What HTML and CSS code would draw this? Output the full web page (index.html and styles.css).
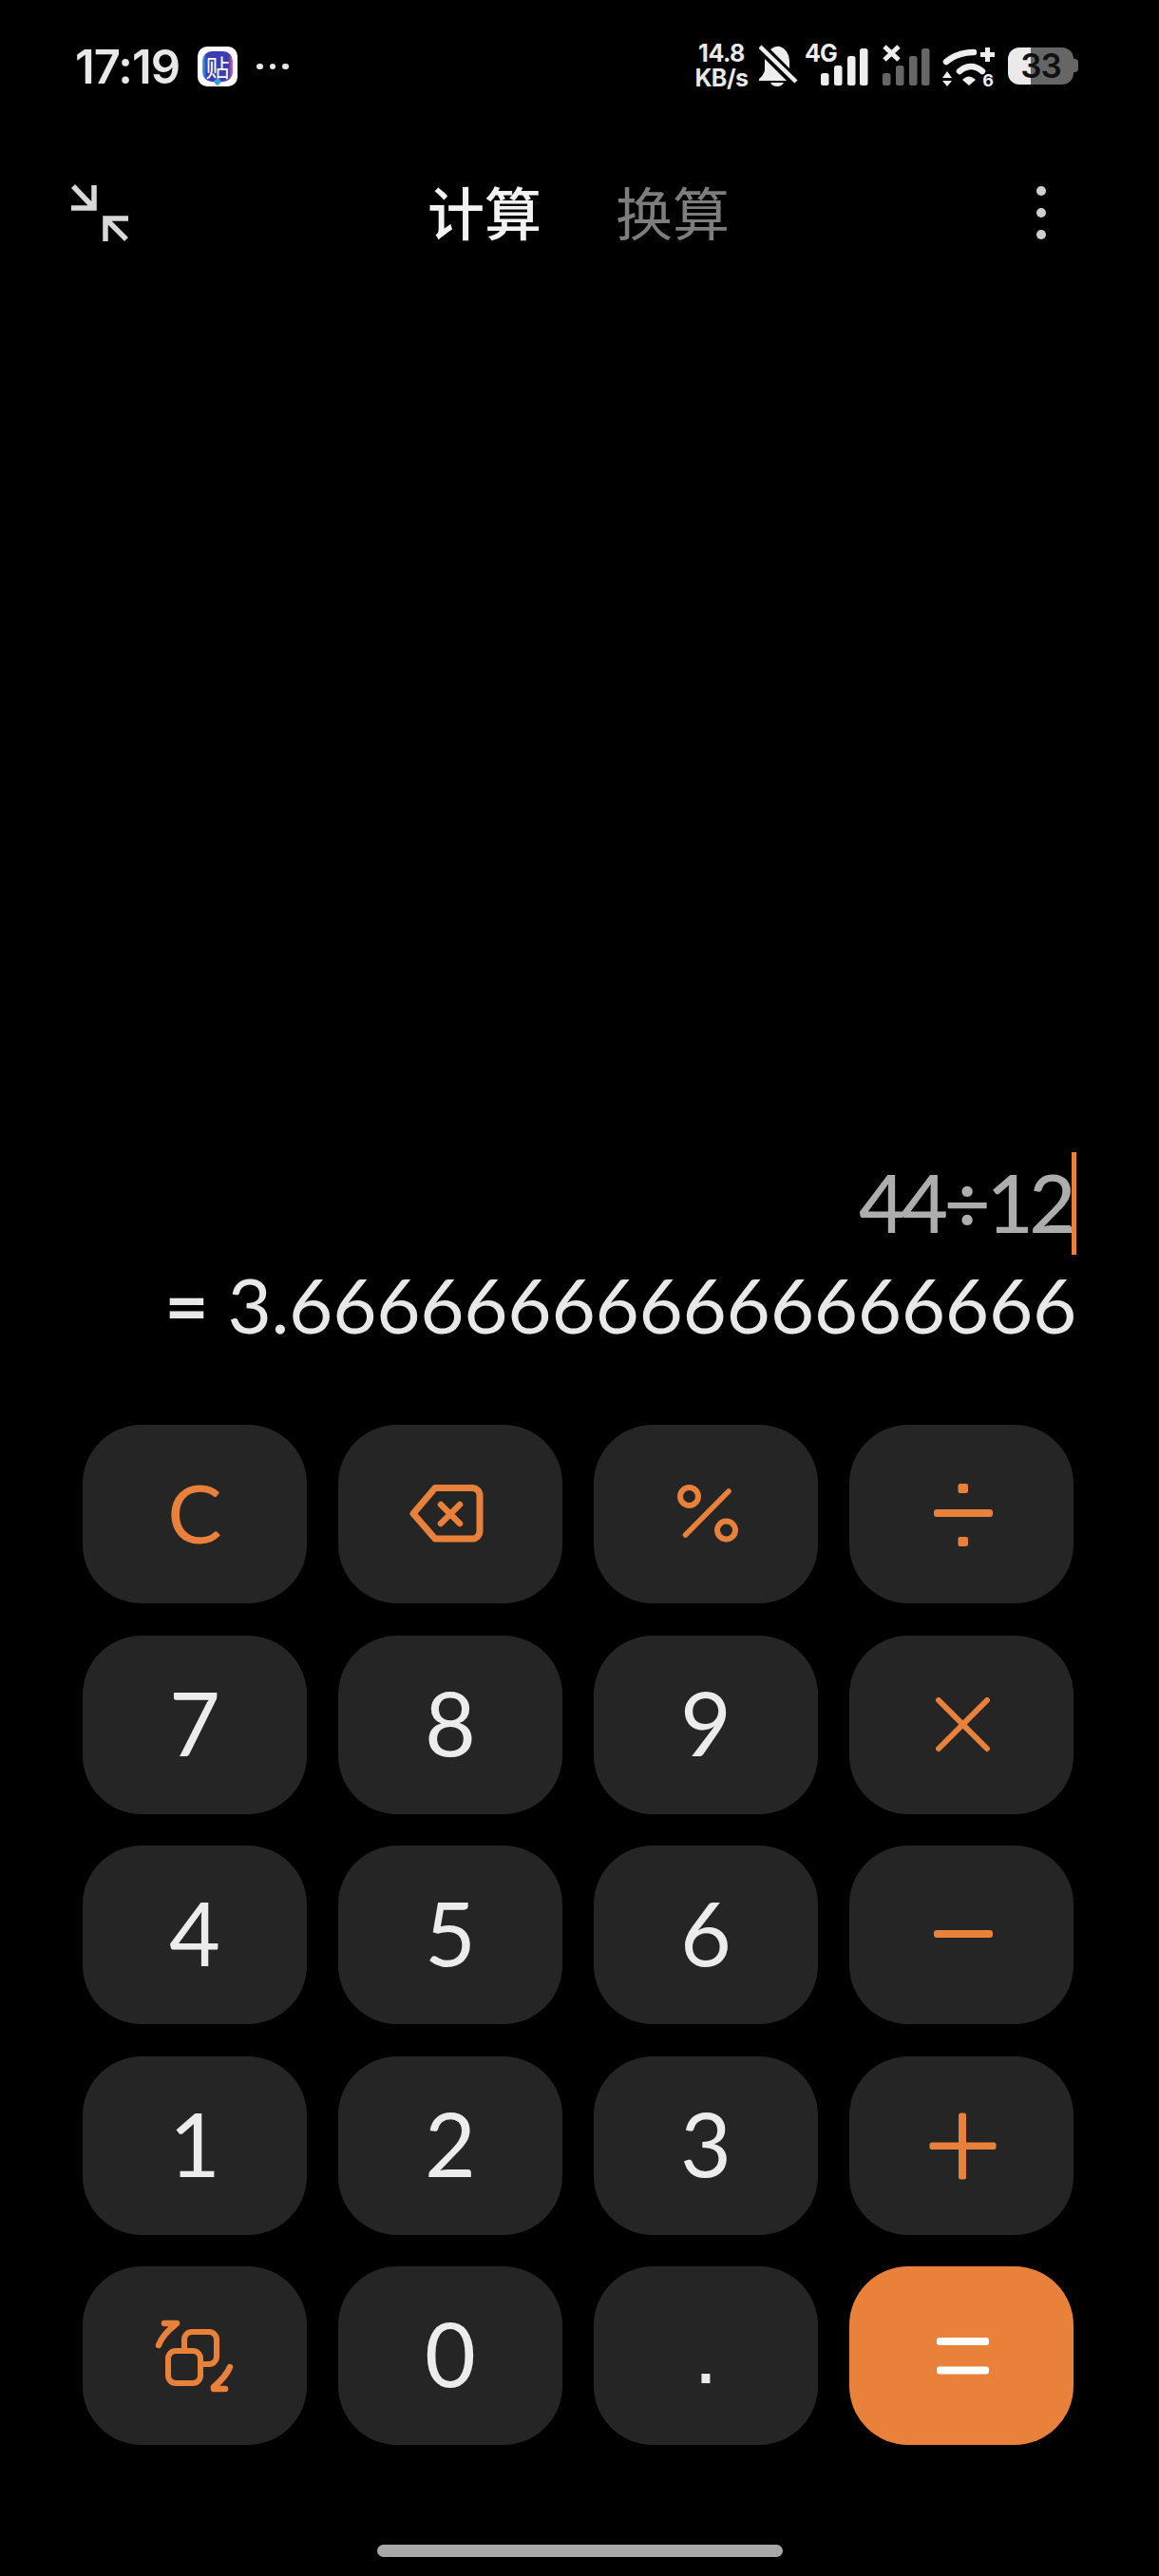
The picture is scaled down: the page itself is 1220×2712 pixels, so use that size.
FILE: index.html
```html
<!DOCTYPE html>
<html lang="zh-CN">
<head>
    <meta charset="UTF-8">
    <meta name="viewport" content="width=device-width, initial-scale=1.0">
    <title>计算器</title>
    <link rel="stylesheet" href="styles.css">
</head>
<body>
<div class="screen">
    <!-- status bar -->
    <div class="status">
        <span class="time">17:19</span>
        <div class="app-icon"><div class="app-bubble">贴</div></div>
        <div class="more-dots"><i></i><i></i><i></i></div>
        <div class="status-right">
            <div class="speed"><span>14.8</span><span>KB/s</span></div>
            <svg class="bell" width="41" height="44" viewBox="0 0 41 44">
                <path d="M12 5Q17 1 22 2Q31 5 32 17V25Z" fill="#eee"/>
                <path d="M6 15V27Q5 32 0 36V38H29Z" fill="#eee"/>
                <path d="M12 40H26Q24 44 19 44Q14 44 12 40Z" fill="#eee"/>
                <path d="M1 2L39 39" stroke="#eee" stroke-width="4.5" fill="none"/>
            </svg>
            <svg class="signal-a" width="67" height="44" viewBox="0 0 67 44">
                <text x="0" y="18" class="net-label">4G</text>
                <rect x="17" y="30" width="8.5" height="13" rx="2.5" fill="#eee"/>
                <rect x="31" y="22" width="8.5" height="21" rx="2.5" fill="#eee"/>
                <rect x="45" y="12" width="8.5" height="31" rx="2.5" fill="#eee"/>
                <rect x="58" y="4" width="8.5" height="39" rx="2.5" fill="#eee"/>
            </svg>
            <svg class="signal-b" width="50" height="44" viewBox="0 0 50 44">
                <path d="M2 2L17 16M17 2L2 16" stroke="#eee" stroke-width="5" fill="none"/>
                <rect x="0" y="30" width="8.5" height="13" rx="2.5" fill="#666"/>
                <rect x="14" y="22" width="8.5" height="21" rx="2.5" fill="#666"/>
                <rect x="28" y="12" width="8.5" height="31" rx="2.5" fill="#666"/>
                <rect x="41" y="4" width="8.5" height="39" rx="2.5" fill="#666"/>
            </svg>
            <svg class="wifi" width="56" height="44" viewBox="0 0 56 44">
                <path d="M4 18Q16 8 33 8" stroke="#eee" stroke-width="6.5" fill="none" stroke-linecap="round"/>
                <path d="M18 28Q30 18 42 28" stroke="#eee" stroke-width="6.5" fill="none" stroke-linecap="round"/>
                <path d="M21 37Q28 30 35 37L28 43Z" fill="#eee"/>
                <path d="M0 35H10L5 28ZM0 38H10L5 44Z" fill="#eee"/>
                <path d="M47.5 3V18M40 10.5H55" stroke="#eee" stroke-width="5" fill="none"/>
                <text x="48" y="44" class="wifi-six">6</text>
            </svg>
            <div class="battery"><div class="battery-body">33</div><div class="battery-tip"></div></div>
        </div>
    </div>

    <!-- title bar -->
    <div class="topbar">
        <svg class="shrink" width="66" height="64" viewBox="0 0 66 64">
            <path d="M5 4L26 26M27 3V27H3" stroke="#d8d8d8" stroke-width="5.5" fill="none"/>
            <path d="M61 60L40 39M39 62V38H63" stroke="#d8d8d8" stroke-width="5.5" fill="none"/>
        </svg>
        <div class="tabs">
            <span class="tab tab-on">计算</span>
            <span class="tab">换算</span>
        </div>
        <div class="kebab"><i></i><i></i><i></i></div>
    </div>

    <!-- expression and result -->
    <div class="display">
        <div class="expr">44÷12</div>
        <div class="result"><b class="result-eq">=</b> 3.666666666666666666</div>
    </div>

    <div class="keypad">
        <div class="key key-op">C</div>
        <div class="key">
            <svg class="key-icon" viewBox="0 0 236 188" role="img" aria-label="退格">
                <path d="M79 93.5L102 66.5H141a8 8 0 0 1 8 8V112a8 8 0 0 1-8 8H102Z" class="line" stroke-width="7"/>
                <path d="M108 84L128 104M128 84L108 104" class="line" stroke-width="6.5"/>
            </svg>
        </div>
        <div class="key">
            <svg class="key-icon" viewBox="0 0 236 188" role="img" aria-label="%">
                <circle cx="100.5" cy="75.5" r="9.5" class="line" stroke-width="6"/>
                <circle cx="139.5" cy="111" r="9.5" class="line" stroke-width="6"/>
                <path d="M96.5 116L142 70" class="line" stroke-width="5.5"/>
            </svg>
        </div>
        <div class="key">
            <svg class="key-icon" viewBox="0 0 236 188" role="img" aria-label="÷">
                <rect x="89" y="89" width="62" height="8" rx="3" class="solid"/>
                <rect x="114.5" y="62" width="10.5" height="10" rx="2" class="solid"/>
                <rect x="114.5" y="118" width="10.5" height="10" rx="2" class="solid"/>
            </svg>
        </div>

        <div class="key">7</div>
        <div class="key">8</div>
        <div class="key">9</div>
        <div class="key">
            <svg class="key-icon" viewBox="0 0 236 188" role="img" aria-label="×">
                <path d="M94 68L145 119M145 68L94 119" class="line" stroke-width="6"/>
            </svg>
        </div>

        <div class="key">4</div>
        <div class="key">5</div>
        <div class="key">6</div>
        <div class="key">
            <svg class="key-icon" viewBox="0 0 236 188" role="img" aria-label="−">
                <rect x="89" y="89" width="62" height="8" rx="3" class="solid"/>
            </svg>
        </div>

        <div class="key">1</div>
        <div class="key">2</div>
        <div class="key">3</div>
        <div class="key">
            <svg class="key-icon" viewBox="0 0 236 188" role="img" aria-label="+">
                <rect x="84.5" y="90.5" width="70" height="7.5" rx="2.5" class="solid"/>
                <rect x="115" y="59.5" width="8" height="70" rx="2.5" class="solid"/>
            </svg>
        </div>

        <div class="key">
            <svg class="key-icon" viewBox="0 0 236 188" role="img" aria-label="切换">
                <rect x="107" y="69" width="34" height="34" rx="8" class="line" stroke-width="6"/>
                <rect x="90" y="89" width="34" height="34" rx="8" class="line cover" stroke-width="6"/>
                <path d="M80 83Q84 72 97 62M86 60H99" class="line" stroke-width="6.5"/>
                <path d="M155 106Q151 116 138 127M150 129H138" class="line" stroke-width="6.5"/>
            </svg>
        </div>
        <div class="key">0</div>
        <div class="key key-dot">.</div>
        <div class="key key-equal">
            <svg class="key-icon" viewBox="0 0 236 188" role="img" aria-label="=">
                <rect x="92" y="75" width="55" height="8" rx="3" fill="#fff"/>
                <rect x="92" y="105.5" width="55" height="8" rx="3" fill="#fff"/>
            </svg>
        </div>
    </div>

    <div class="home-area"><div class="home-bar"></div></div>
</div>
</body>
</html>
```

FILE: styles.css
```css
* {
    box-sizing: border-box;
}
body {
    margin: 0;
    background-color: #000;
    font-family: Lato, "Noto Sans CJK SC", sans-serif;
}
.screen {
    width: 1220px;
    height: 2712px;
    display: flex;
    flex-direction: column;
    background-color: #000;
    overflow: hidden;
}

/* status bar */
.status {
    height: 140px;
    flex: none;
    display: flex;
    align-items: center;
    padding-left: 79px;
    color: #e8e8e8;
}
.time {
    font-family: Inter, sans-serif;
    font-size: 49px;
    font-weight: 600;
    letter-spacing: -1px;
    width: 129px;
}
.app-icon {
    width: 42px;
    height: 42px;
    border-radius: 10px;
    background-color: #fff;
    display: flex;
    align-items: center;
    justify-content: center;
}
.app-bubble {
    position: relative;
    width: 32px;
    height: 32px;
    border-radius: 10px;
    background: linear-gradient(90deg, #38b4f0 0, #3d3db2 14%, #3d3db2 86%, #e0609f 100%);
    color: #fff;
    font-family: "Noto Sans CJK SC", sans-serif;
    font-size: 25px;
    line-height: 32px;
    text-align: center;
}
.app-bubble::after {
    content: "";
    position: absolute;
    left: 13px;
    bottom: -3px;
    width: 6px;
    height: 6px;
    background-color: #38a0e8;
    transform: rotate(45deg);
}
.more-dots {
    display: flex;
    gap: 7px;
    margin-left: 20px;
}
.more-dots i {
    width: 6.5px;
    height: 6.5px;
    border-radius: 50%;
    background-color: #e8e8e8;
}
.status-right {
    display: flex;
    align-items: center;
    position: absolute;
    left: 733px;
    top: 47px;
    height: 44px;
}
.speed {
    width: 53px;
    display: flex;
    flex-direction: column;
    align-items: center;
    font-family: Inter, sans-serif;
    font-size: 25px;
    font-weight: 700;
    line-height: 26px;
    letter-spacing: -0.5px;
    color: #e8e8e8;
}
.bell {
    margin-left: 13px;
}
.signal-a {
    margin-left: 7px;
    overflow: visible;
}
.signal-b {
    margin-left: 15px;
}
.wifi {
    margin-left: 13px;
    overflow: visible;
}
.net-label {
    font-family: Inter, sans-serif;
    font-size: 25px;
    font-weight: 700;
    letter-spacing: -1px;
    fill: #eee;
}
.wifi-six {
    font-family: Inter, sans-serif;
    font-size: 18px;
    font-weight: 700;
    text-anchor: middle;
    fill: #eee;
}
.battery {
    display: flex;
    align-items: center;
    margin-left: 13px;
}
.battery-body {
    width: 69px;
    height: 39px;
    border-radius: 12px;
    background: linear-gradient(90deg, #eaeaea 35%, #666 35%);
    color: #111;
    font-family: Inter, sans-serif;
    font-size: 35px;
    font-weight: 600;
    line-height: 39px;
    text-align: center;
    letter-spacing: -1px;
}
.battery-tip {
    width: 5px;
    height: 14px;
    border-radius: 0 4px 4px 0;
    background-color: #666;
}

/* title bar */
.topbar {
    height: 168px;
    flex: none;
    display: flex;
    align-items: center;
    padding: 0 119px 0 72px;
}
.tabs {
    display: flex;
    gap: 78px;
    margin: 0 0 4px 312px;
}
.tab {
    font-family: "Noto Sans CJK SC", sans-serif;
    font-size: 60px;
    line-height: 70px;
    color: #7d7d7d;
}
.tab-on {
    color: #f2f2f2;
    font-weight: 500;
}
.kebab {
    margin-left: auto;
    display: flex;
    flex-direction: column;
    gap: 13px;
}
.kebab i {
    width: 10px;
    height: 10px;
    border-radius: 50%;
    background-color: #d0d0d0;
}

/* display */
.display {
    flex: 1;
    display: flex;
    flex-direction: column;
    align-items: flex-end;
    justify-content: flex-end;
    padding: 0 87px 74px 0;
}
.expr {
    height: 108px;
    font-size: 85px;
    font-weight: 500;
    line-height: 104px;
    letter-spacing: -4.5px;
    color: #adadad;
    border-right: 5px solid #e9813b;
}
.result {
    height: 105px;
    font-size: 80px;
    line-height: 105px;
    letter-spacing: -0.35px;
    color: #e8e8e8;
    white-space: nowrap;
}
.result-eq {
    font-weight: 700;
}

/* keypad */
.keypad {
    flex: none;
    display: grid;
    grid-template-columns: repeat(4, 236px);
    grid-auto-rows: 188px;
    column-gap: 33px;
    row-gap: 33.5px;
    padding-left: 87px;
}
.key {
    display: flex;
    align-items: center;
    justify-content: center;
    padding-bottom: 5px;
    border-radius: 62px;
    background-color: #252525;
    color: #ececec;
    font-size: 93px;
    line-height: 1;
}
.key-op {
    color: #e9813b;
    font-size: 86px;
}
.key-dot {
    font-family: "Liberation Sans", sans-serif;
}
.key-equal {
    background-color: #e9813b;
}
.key-icon {
    display: block;
    flex: none;
    width: 236px;
    height: 188px;
    margin-bottom: -5px;
}
.line {
    fill: none;
    stroke: #e9813b;
    stroke-linecap: round;
    stroke-linejoin: round;
}
.cover {
    fill: #252525;
}
.solid {
    fill: #e9813b;
}

.home-area {
    height: 138px;
    flex: none;
    display: flex;
    justify-content: center;
    align-items: flex-end;
    padding-bottom: 20px;
}
.home-bar {
    width: 427px;
    height: 13px;
    border-radius: 7px;
    background-color: #a8a8a8;
}
```
